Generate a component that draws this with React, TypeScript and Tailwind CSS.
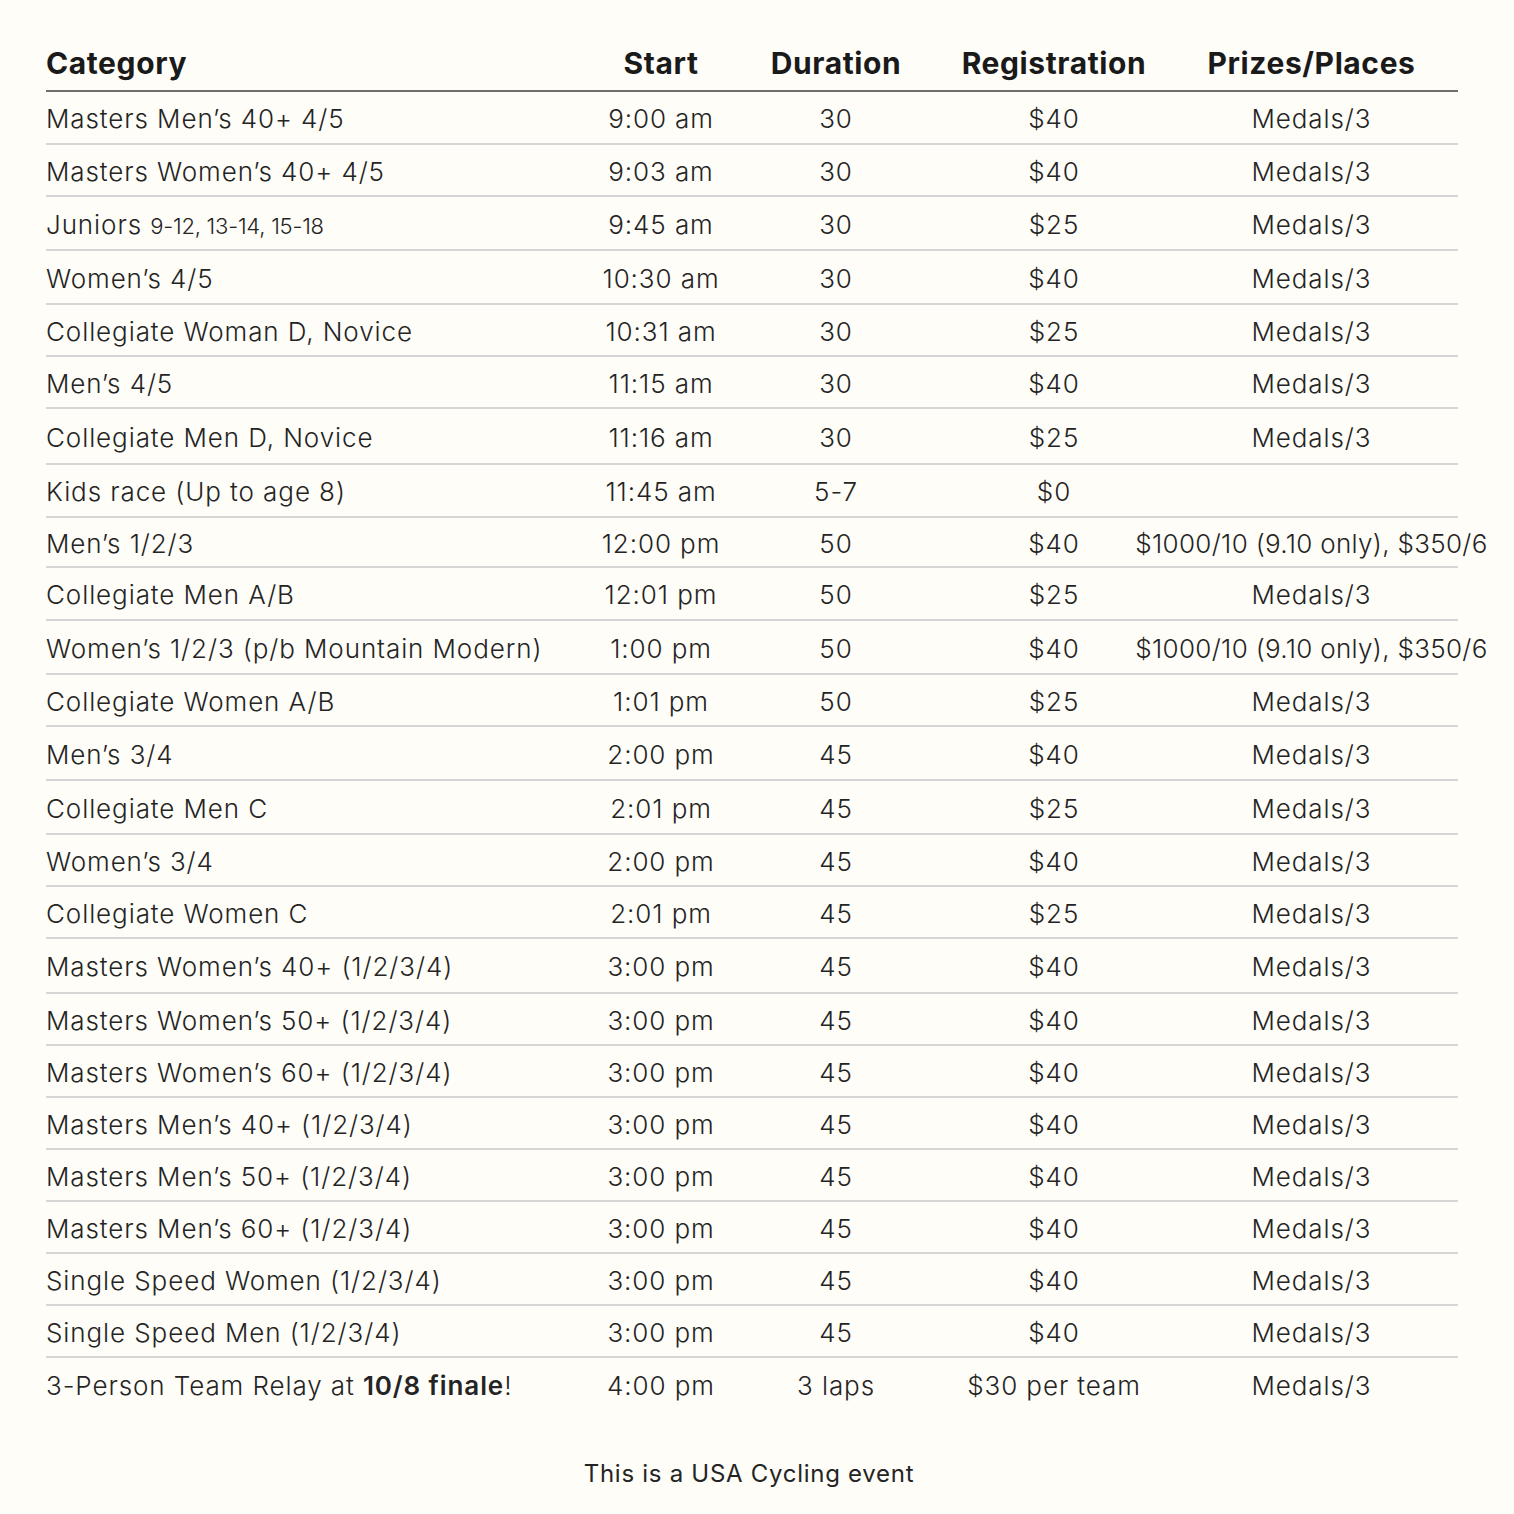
import React from "react";

type Row = {
  category: React.ReactNode;
  start: string;
  duration: string;
  fee: string;
  prize: string;
  h: string;
};

const medals = "Medals/3";
const big = "$1000/10 (9.10 only), $350/6";

const rows: Row[] = [
  { category: "Masters Men’s 40+ 4/5", start: "9:00 am", duration: "30", fee: "$40", prize: medals, h: "h-[53px]" },
  { category: "Masters Women’s 40+ 4/5", start: "9:03 am", duration: "30", fee: "$40", prize: medals, h: "h-[52px]" },
  {
    category: (
      <>
        Juniors <span className="text-[22px] tracking-[-0.01em]">9-12, 13-14, 15-18</span>
      </>
    ),
    start: "9:45 am",
    duration: "30",
    fee: "$25",
    prize: medals,
    h: "h-[54px]",
  },
  { category: "Women’s 4/5", start: "10:30 am", duration: "30", fee: "$40", prize: medals, h: "h-[54px]" },
  { category: "Collegiate Woman D, Novice", start: "10:31 am", duration: "30", fee: "$25", prize: medals, h: "h-[52px]" },
  { category: "Men’s 4/5", start: "11:15 am", duration: "30", fee: "$40", prize: medals, h: "h-[52px]" },
  { category: "Collegiate Men D, Novice", start: "11:16 am", duration: "30", fee: "$25", prize: medals, h: "h-[56px]" },
  { category: "Kids race (Up to age 8)", start: "11:45 am", duration: "5-7", fee: "$0", prize: "", h: "h-[53px]" },
  { category: "Men’s 1/2/3", start: "12:00 pm", duration: "50", fee: "$40", prize: big, h: "h-[50px]" },
  { category: "Collegiate Men A/B", start: "12:01 pm", duration: "50", fee: "$25", prize: medals, h: "h-[53px]" },
  { category: "Women’s 1/2/3 (p/b Mountain Modern)", start: "1:00 pm", duration: "50", fee: "$40", prize: big, h: "h-[54px]" },
  { category: "Collegiate Women A/B", start: "1:01 pm", duration: "50", fee: "$25", prize: medals, h: "h-[52px]" },
  { category: "Men’s 3/4", start: "2:00 pm", duration: "45", fee: "$40", prize: medals, h: "h-[54px]" },
  { category: "Collegiate Men C", start: "2:01 pm", duration: "45", fee: "$25", prize: medals, h: "h-[54px]" },
  { category: "Women’s 3/4", start: "2:00 pm", duration: "45", fee: "$40", prize: medals, h: "h-[52px]" },
  { category: "Collegiate Women C", start: "2:01 pm", duration: "45", fee: "$25", prize: medals, h: "h-[52px]" },
  { category: "Masters Women’s 40+ (1/2/3/4)", start: "3:00 pm", duration: "45", fee: "$40", prize: medals, h: "h-[55px]" },
  { category: "Masters Women’s 50+ (1/2/3/4)", start: "3:00 pm", duration: "45", fee: "$40", prize: medals, h: "h-[52px]" },
  { category: "Masters Women’s 60+ (1/2/3/4)", start: "3:00 pm", duration: "45", fee: "$40", prize: medals, h: "h-[52px]" },
  { category: "Masters Men’s 40+ (1/2/3/4)", start: "3:00 pm", duration: "45", fee: "$40", prize: medals, h: "h-[52px]" },
  { category: "Masters Men’s 50+ (1/2/3/4)", start: "3:00 pm", duration: "45", fee: "$40", prize: medals, h: "h-[52px]" },
  { category: "Masters Men’s 60+ (1/2/3/4)", start: "3:00 pm", duration: "45", fee: "$40", prize: medals, h: "h-[52px]" },
  { category: "Single Speed Women (1/2/3/4)", start: "3:00 pm", duration: "45", fee: "$40", prize: medals, h: "h-[52px]" },
  { category: "Single Speed Men (1/2/3/4)", start: "3:00 pm", duration: "45", fee: "$40", prize: medals, h: "h-[52px]" },
  {
    category: (
      <>
        3-Person Team Relay at <span className="font-semibold">10/8 finale</span>!
      </>
    ),
    start: "4:00 pm",
    duration: "3 laps",
    fee: "$30 per team",
    prize: medals,
    h: "h-[52px]",
  },
];

const cols = "grid grid-cols-[529px_172px_178px_258px_275px]";

export default function App() {
  return (
    <div
      className="min-h-[1514px] w-full bg-[#fefdf8] text-[#242424] pt-[30px]"
      style={{ fontFamily: "Inter, 'Noto Sans', sans-serif" }}
    >
      <div className="w-[1412px] ml-[46px]">
        {/* header */}
        <div className={`${cols} h-[62px] items-center pt-[7px] border-b-2 border-[#6e6e6e] text-[30px] font-bold tracking-[0.02em] text-[#1a1a1a]`}>
          <div>Category</div>
          <div className="text-center">Start</div>
          <div className="text-center">Duration</div>
          <div className="text-center">Registration</div>
          <div className="text-center pr-[18px]">Prizes/Places</div>
        </div>

        {rows.map((r, i) => (
          <div
            key={i}
            className={`${cols} ${r.h} items-center pt-[2px] text-[26px] font-light tracking-[0.035em] ${
              i < rows.length - 1 ? "border-b-2 border-[#d6d6d6]" : ""
            }`}
          >
            <div className="whitespace-nowrap">{r.category}</div>
            <div className="text-center whitespace-nowrap">{r.start}</div>
            <div className="text-center whitespace-nowrap">{r.duration}</div>
            <div className="text-center whitespace-nowrap">{r.fee}</div>
            <div className="flex justify-center pr-[18px] whitespace-nowrap">
              <span className={r.prize === big ? "tracking-[0.012em]" : ""}>{r.prize}</span>
            </div>
          </div>
        ))}

        <div className="mt-[46px] text-center text-[24px] font-normal tracking-[0.03em] pr-[6px]">
          This is a USA Cycling event
        </div>
      </div>
    </div>
  );
}
